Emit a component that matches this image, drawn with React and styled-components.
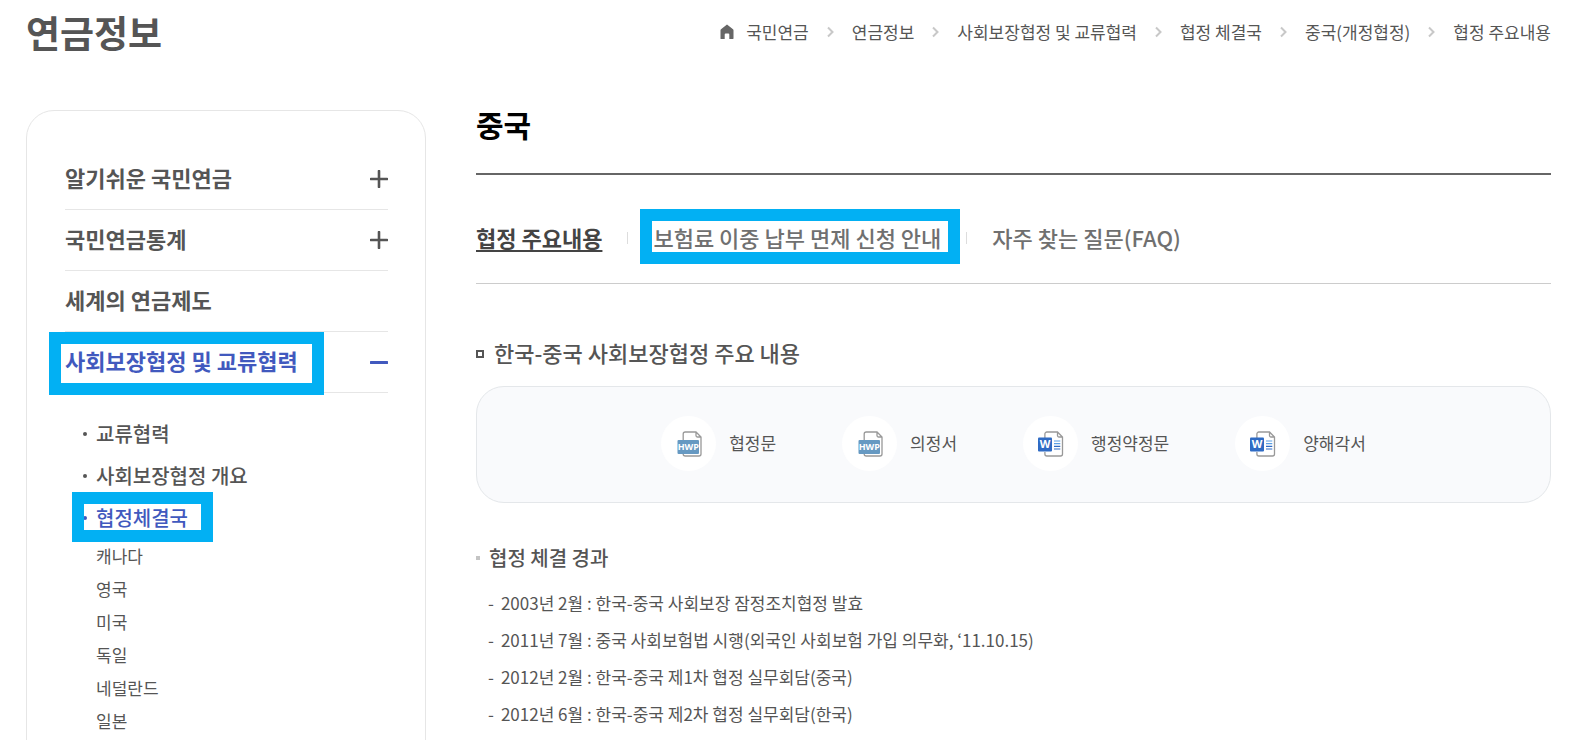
import React, { useState } from "react";
import styled, { createGlobalStyle, css } from "styled-components";

const GlobalStyle = createGlobalStyle`
  *, *::before, *::after {
    box-sizing: border-box;
  }

  body {
    margin: 0;
    background-color: #fff;
    color: #555;
    font-family: "Noto Sans CJK KR", "Noto Sans", sans-serif;
    font-size: 17px;
  }

  h1, h2, h3, h4, ul, ol {
    margin: 0;
    padding: 0;
    list-style: none;
  }

  a {
    color: inherit;
    text-decoration: none;
  }
`;

const Page = styled.div`
  height: 100vh;
  overflow: hidden;
  padding: 0 34px 0 26px;
`;

const Header = styled.header`
  display: flex;
  justify-content: space-between;
  height: 110px;
`;

const SiteTitle = styled.h1`
  font-size: 37px;
  font-weight: 700;
  line-height: 64px;
`;

const Crumbs = styled.ol`
  display: flex;
  align-items: center;
  height: 64px;
`;

const Crumb = styled.li`
  display: flex;
  align-items: center;
  white-space: nowrap;
  line-height: 24px;

  & + & > svg {
    margin: 0 18px;
  }
`;

const CrumbLink = styled.a`
  display: flex;
  align-items: center;
  gap: 12px;
`;

const Body = styled.div`
  display: flex;
  align-items: flex-start;
  gap: 50px;
`;

const Sidebar = styled.nav`
  flex: 0 0 400px;
  padding: 38px 37px 38px 38px;
  border: 1px solid #e6e6e6;
  border-radius: 28px;
`;

const Marked = styled.span`
  position: relative;

  ${({ $inset }) =>
    $inset &&
    css`
      &::after {
        content: "";
        position: absolute;
        inset: ${$inset};
        border: 12px solid #02b0f3;
        pointer-events: none;
      }
    `}
`;

const MenuLabel = styled(Marked)`
  padding-bottom: 4px;
`;

const MenuButton = styled.button`
  display: flex;
  align-items: center;
  justify-content: space-between;
  width: 100%;
  height: 61px;
  padding: 0;
  border: none;
  border-bottom: 1px solid #e6e6e6;
  background: none;
  color: ${({ $active }) => ($active ? "#4159be" : "#555")};
  font-family: inherit;
  font-size: 22px;
  font-weight: 700;
  line-height: 32px;
  cursor: pointer;
`;

const SubMenu = styled.ul`
  padding: 20px 0 40px 31px;
`;

const SubLink = styled.a`
  position: relative;
  display: block;
  color: ${({ $active }) => ($active ? "#4159be" : "#555")};
  font-size: 20px;
  font-weight: 500;
  line-height: 42px;

  &::before {
    content: "";
    position: absolute;
    left: -13px;
    top: 19px;
    width: 4px;
    height: 4px;
    border-radius: 50%;
    background-color: currentColor;
  }
`;

const CountryLink = styled.a`
  display: block;
  line-height: 33px;
`;

const Content = styled.main`
  flex: 1;
  min-width: 0;
`;

const PageTitle = styled.h2`
  padding-bottom: 35px;
  border-bottom: 2px solid #666;
  color: #000;
  font-size: 30px;
  font-weight: 700;
  line-height: 28px;
`;

const Tabs = styled.ul`
  display: flex;
  padding: 47px 0 29px;
  border-bottom: 1px solid #ccc;
`;

const Tab = styled.li`
  display: flex;
  align-items: center;
  height: 32px;
  white-space: nowrap;

  & + &::before {
    content: "";
    width: 1px;
    height: 12px;
    margin: 0 25px;
    background-color: #ddd;
  }
`;

const TabLink = styled.a`
  padding-bottom: 2px;
  color: ${({ $active }) => ($active ? "#444" : "#707070")};
  font-size: 22px;
  font-weight: ${({ $active }) => ($active ? 700 : 500)};
  line-height: 32px;
  ${({ $active }) =>
    $active &&
    css`
      text-decoration: underline;
      text-decoration-thickness: 2px;
      text-underline-offset: 3px;
      text-decoration-skip-ink: none;
    `}
`;

const SectionTitle = styled.h3`
  display: flex;
  align-items: center;
  gap: 10px;
  margin: 52px 0 18px;
  font-size: 22px;
  font-weight: 500;
  line-height: 32px;

  &::before {
    content: "";
    width: 8px;
    height: 8px;
    margin-top: 4px;
    border: 2px solid #555;
  }
`;

const Files = styled.ul`
  display: flex;
  justify-content: center;
  gap: 66px;
  padding: 29px 20px 31px;
  border: 1px solid #e4e7ea;
  border-radius: 28px;
  background-color: #f9fafc;
`;

const FileLink = styled.a`
  display: flex;
  align-items: center;
  gap: 13px;
  white-space: nowrap;
`;

const FileName = styled.span`
  padding-bottom: 2px;
`;

const IconCircle = styled.span`
  display: flex;
  align-items: center;
  justify-content: center;
  width: 55px;
  height: 55px;
  border-radius: 50%;
  background-color: #fff;
`;

const ListTitle = styled.h4`
  display: flex;
  align-items: center;
  gap: 9px;
  margin: 39px 0 10px;
  font-size: 20px;
  font-weight: 500;
  line-height: 32px;

  &::before {
    content: "";
    width: 4px;
    height: 4px;
    background-color: #c4c4c4;
  }
`;

const History = styled.ul`
  padding-left: 12px;
`;

const HistoryItem = styled.li`
  display: flex;
  gap: 7px;
  line-height: 37px;

  &::before {
    content: "-";
  }
`;

const HomeIcon = () => (
  <svg width="14" height="16" viewBox="0 0 14 16" aria-hidden="true">
    <path
      d="M7 .5 13 5.2c.3.3.5.6.5 1V14.5c0 .3-.2.5-.5.5H9.3V10.500a1 1 0 0 0-1-1H5.700a1 1 0 0 0-1 1V15H1a.5.5 0 0 1-.5-.5V6.200c0-.4.2-.7.5-1z"
      fill="#666"
    />
  </svg>
);

const ChevronIcon = () => (
  <svg width="7" height="12" viewBox="0 0 7 12" aria-hidden="true">
    <path d="M1 1.5 5.5 6 1 10.5" fill="none" stroke="#c8c8c8" strokeWidth="2" />
  </svg>
);

const ToggleIcon = ({ open }) => (
  <svg width="18" height="18" viewBox="0 0 18 18" aria-hidden="true">
    <path
      d={open ? "M1 9.500h16" : "M1 9h16M9 1v16"}
      fill="none"
      stroke="currentColor"
      strokeWidth={open ? 3 : 2.6}
      strokeLinecap="round"
    />
  </svg>
);

const HwpIcon = () => (
  <svg width="26" height="26" viewBox="0 0 26 26" aria-hidden="true">
    <path
      d="M7.200 9V3a2 2 0 0 1 2-2H20l5 5v17a2 2 0 0 1-2 2H9.200a2 2 0 0 1-2-2v-1M20 1v3.500A1.500 1.500 0 0 0 21.500 6H25"
      fill="#fff"
      stroke="#999"
      strokeWidth="1.300"
    />
    <rect x="1.500" y="9" width="21.500" height="14" rx="1" fill="#6699c2" />
    <text
      x="12.300"
      y="19.300"
      fill="#fff"
      fontFamily="Open Sans, sans-serif"
      fontSize="9"
      fontWeight="700"
      textAnchor="middle"
    >
      HWP
    </text>
  </svg>
);

const WordIcon = () => (
  <svg width="26" height="26" viewBox="0 0 26 26" aria-hidden="true">
    <path
      d="M6.900 7V3a2 2 0 0 1 2-2H19.500l5 5v17a2 2 0 0 1-2 2H8.900a2 2 0 0 1-2-2v-2M19.500 1v3.500A1.500 1.500 0 0 0 21 6H24.500"
      fill="#fff"
      stroke="#999"
      strokeWidth="1.300"
    />
    <path d="M16 10h6.300M16 12.700h6.300" stroke="#5ba0e6" strokeWidth="1.200" />
    <path d="M16 15.300h6.300M16 18h6.300" stroke="#2f6bc4" strokeWidth="1.200" />
    <rect x="0" y="6.500" width="14" height="14" rx="1" fill="#2f6bc4" />
    <text
      x="7"
      y="17.300"
      fill="#fff"
      fontFamily="Open Sans, sans-serif"
      fontSize="11"
      fontWeight="700"
      textAnchor="middle"
    >
      W
    </text>
  </svg>
);

const crumbs = [
  "국민연금",
  "연금정보",
  "사회보장협정 및 교류협력",
  "협정 체결국",
  "중국(개정협정)",
  "협정 주요내용",
];

const menu = [
  { title: "알기쉬운 국민연금", expandable: true },
  { title: "국민연금통계", expandable: true },
  { title: "세계의 연금제도" },
  { title: "사회보장협정 및 교류협력", expandable: true, marked: true },
];

const countries = ["캐나다", "영국", "미국", "독일", "네덜란드", "일본"];

const tabs = [
  { title: "협정 주요내용" },
  { title: "보험료 이중 납부 면제 신청 안내", marked: true },
  { title: "자주 찾는 질문(FAQ)" },
];

const files = [
  { title: "협정문", Icon: HwpIcon },
  { title: "의정서", Icon: HwpIcon },
  { title: "행정약정문", Icon: WordIcon },
  { title: "양해각서", Icon: WordIcon },
];

const history = [
  "2003년 2월 : 한국-중국 사회보장 잠정조치협정 발효",
  "2011년 7월 : 중국 사회보험법 시행(외국인 사회보험 가입 의무화, ‘11.10.15)",
  "2012년 2월 : 한국-중국 제1차 협정 실무회담(중국)",
  "2012년 6월 : 한국-중국 제2차 협정 실무회담(한국)",
];

const App = () => {
  const [openMenu, setOpenMenu] = useState(3);

  return (
    <Page>
      <GlobalStyle />
      <Header>
        <SiteTitle>연금정보</SiteTitle>
        <Crumbs>
          {crumbs.map((crumb, index) => (
            <Crumb key={crumb}>
              {index > 0 && <ChevronIcon />}
              <CrumbLink href="#">
                {index === 0 && <HomeIcon />}
                {crumb}
              </CrumbLink>
            </Crumb>
          ))}
        </Crumbs>
      </Header>
      <Body>
        <Sidebar>
          {menu.map(({ title, expandable, marked }, index) => (
            <MenuButton
              key={title}
              type="button"
              $active={openMenu === index}
              onClick={() => setOpenMenu(index)}
            >
              <MenuLabel $inset={marked && "-12px -26px -15px -16px"}>
                {title}
              </MenuLabel>
              {expandable && <ToggleIcon open={openMenu === index} />}
            </MenuButton>
          ))}
          {openMenu === 3 && (
            <SubMenu>
              <li>
                <SubLink href="#">교류협력</SubLink>
              </li>
              <li>
                <SubLink href="#">사회보장협정 개요</SubLink>
              </li>
              <li>
                <SubLink href="#" $active>
                  <Marked $inset="-11px -25px -10px -24px">협정체결국</Marked>
                </SubLink>
                <ul>
                  {countries.map((country) => (
                    <li key={country}>
                      <CountryLink href="#">{country}</CountryLink>
                    </li>
                  ))}
                </ul>
              </li>
            </SubMenu>
          )}
        </Sidebar>
        <Content>
          <PageTitle>중국</PageTitle>
          <Tabs>
            {tabs.map(({ title, marked }, index) => (
              <Tab key={title}>
                <TabLink href="#" $active={index === 0}>
                  <Marked $inset={marked && "-12px -19px -11px -13px"}>
                    {title}
                  </Marked>
                </TabLink>
              </Tab>
            ))}
          </Tabs>
          <SectionTitle>한국-중국 사회보장협정 주요 내용</SectionTitle>
          <Files>
            {files.map(({ title, Icon }) => (
              <li key={title}>
                <FileLink href="#">
                  <IconCircle>
                    <Icon />
                  </IconCircle>
                  <FileName>{title}</FileName>
                </FileLink>
              </li>
            ))}
          </Files>
          <ListTitle>협정 체결 경과</ListTitle>
          <History>
            {history.map((item) => (
              <HistoryItem key={item}>{item}</HistoryItem>
            ))}
          </History>
        </Content>
      </Body>
    </Page>
  );
};

export default App;
